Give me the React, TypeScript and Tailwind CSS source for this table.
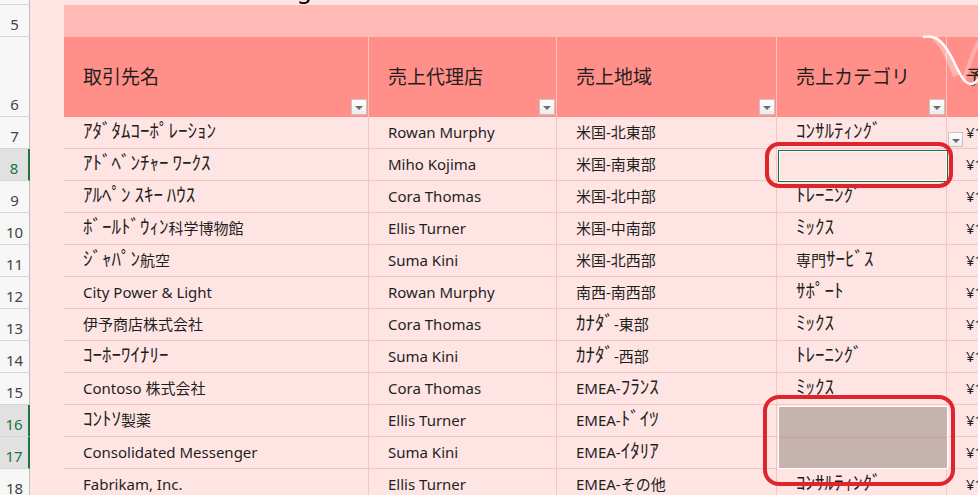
import React from 'react';

const FONT = "font-['Noto_Sans','Noto_Sans_CJK_JP',sans-serif]";

type Row = [number, string, string, string, string];

const ROWS: Row[] = [
    [7, 'ｱﾀﾞﾀﾑｺｰﾎﾟﾚｰｼｮﾝ', 'Rowan Murphy', '米国-北東部', 'ｺﾝｻﾙﾃｨﾝｸﾞ'],
    [8, 'ｱﾄﾞﾍﾞﾝﾁｬｰ ﾜｰｸｽ', 'Miho Kojima', '米国-南東部', ''],
    [9, 'ｱﾙﾍﾟﾝ ｽｷｰ ﾊｳｽ', 'Cora Thomas', '米国-北中部', 'ﾄﾚｰﾆﾝｸﾞ'],
    [10, 'ﾎﾞｰﾙﾄﾞｳｨﾝ科学博物館', 'Ellis Turner', '米国-中南部', 'ﾐｯｸｽ'],
    [11, 'ｼﾞｬﾊﾟﾝ航空', 'Suma Kini', '米国-北西部', '専門ｻｰﾋﾞｽ'],
    [12, 'City Power & Light', 'Rowan Murphy', '南西-南西部', 'ｻﾎﾟｰﾄ'],
    [13, '伊予商店株式会社', 'Cora Thomas', 'ｶﾅﾀﾞ-東部', 'ﾐｯｸｽ'],
    [14, 'ｺｰﾎｰﾜｲﾅﾘｰ', 'Suma Kini', 'ｶﾅﾀﾞ-西部', 'ﾄﾚｰﾆﾝｸﾞ'],
    [15, 'Contoso 株式会社', 'Cora Thomas', 'EMEA-ﾌﾗﾝｽ', 'ﾐｯｸｽ'],
    [16, 'ｺﾝﾄｿ製薬', 'Ellis Turner', 'EMEA-ﾄﾞｲﾂ', ''],
    [17, 'Consolidated Messenger', 'Suma Kini', 'EMEA-ｲﾀﾘｱ', ''],
    [18, 'Fabrikam, Inc.', 'Ellis Turner', 'EMEA-その他', 'ｺﾝｻﾙﾃｨﾝｸﾞ'],
];

const SELECTED = [8, 16, 17];

// half-width kana in the sheet's font are about as tall as the kanji
const Jp = ({ t }: { t: string }) => (
    <span className="whitespace-pre">
        {t.split(/([\uFF61-\uFF9F]+)/).map((part, i) =>
            /[\uFF61-\uFF9F]/.test(part)
                ? <span key={i} className="text-[19px] leading-none">{part}</span>
                : <span key={i}>{part}</span>
        )}
    </span>
);

const RowHead = ({ n }: { n?: number }) => {
    const sel = n !== undefined && SELECTED.includes(n);
    return (
        <div
            className={`w-[30px] shrink-0 flex items-end justify-center pb-[4px] text-[15px] leading-none border-b border-[#d5d5d5] ${
                sel
                    ? 'bg-[#e1e1e1] text-[#217346] border-r-2 border-r-[#217346]'
                    : 'bg-[#f7f7f7] text-[#444] border-r border-r-[#bfbfbf]'
            }`}
        >
            {n}
        </div>
    );
};

const Arrow = () => (
    <div className="w-0 h-0 mt-[2px] border-l-[4px] border-r-[4px] border-t-[4px] border-l-transparent border-r-transparent border-t-[#6d6d6d]" />
);

const FilterBtn = () => (
    <div className="absolute right-[1px] bottom-[2px] w-[16px] h-[16px] border border-[#c4c4c4] bg-gradient-to-b from-white to-[#ececec] flex items-center justify-center">
        <Arrow />
    </div>
);

const WIDTHS = ['w-[305px]', 'w-[188px]', 'w-[220px]', 'w-[170px]'];

export default function App() {
    return (
        <div className={`relative w-[978px] h-[495px] overflow-hidden bg-[#fee5e4] text-[#1f1f1f] ${FONT}`}>
            {/* Row 4 (mostly scrolled off) */}
            <div className="flex h-[5px]">
                <RowHead />
                <div className="flex-1" />
            </div>

            {/* Row 5 */}
            <div className="flex h-[32px]">
                <RowHead n={5} />
                <div className="w-[34px] shrink-0" />
                <div className="flex-1 bg-[#ffbab6]" />
            </div>

            {/* Row 6: header */}
            <div className="flex h-[80px]">
                <RowHead n={6} />
                <div className="w-[34px] shrink-0" />
                {['取引先名', '売上代理店', '売上地域', '売上カテゴリ'].map((h, i) => (
                    <div key={h} className={`${WIDTHS[i]} shrink-0 relative flex items-center pl-[19px] text-[19px] bg-[#ff8f88] border-r border-[#ffc3bf] whitespace-nowrap`}>
                        {h}
                        <FilterBtn />
                    </div>
                ))}
                <div className="flex-1 flex items-center pl-[18px] text-[19px] bg-[#ff8f88] whitespace-nowrap overflow-hidden">予測</div>
            </div>

            {/* Data rows */}
            {ROWS.map(([n, a, b, c, d]) => (
                <div key={n} className="flex h-[32px] text-[15px]">
                    <RowHead n={n} />
                    <div className="w-[34px] shrink-0" />
                    {[a, b, c, d].map((v, i) => (
                        <div key={i} className={`${WIDTHS[i]} shrink-0 flex items-center pl-[19px] border-r border-b border-[#f6c4c1] whitespace-nowrap overflow-hidden`}>
                            <Jp t={v} />
                        </div>
                    ))}
                    <div className="flex-1 flex items-center pl-[19px] border-b border-[#f6c4c1] whitespace-nowrap overflow-hidden">¥1,250,000</div>
                </div>
            ))}

            {/* clipped title descender */}
            <span className="absolute left-[297px] top-[-23px] text-[24px] leading-[24px] text-black">g</span>

            {/* theme decoration */}
            <svg className="absolute left-[915px] top-[30px]" width="63" height="65" viewBox="0 0 63 65" fill="none">
                <path d="M20 8 C30 16 34 30 41 46" stroke="#fff" strokeOpacity="0.35" strokeWidth="6" />
                <path d="M48 52 C54 36 57 22 66 8" stroke="#fff" strokeOpacity="0.3" strokeWidth="4" />
                <path d="M8 7 C22 4 30 14 38 30 C45 45 50 54 56 54 C60 54 63 50 66 46" stroke="#fff" strokeWidth="2.5" />
            </svg>

            {/* validation dropdown on E7 */}
            <div className="absolute left-[948px] top-[132px] w-[15px] h-[15px] border border-[#c4c4c4] bg-gradient-to-b from-white to-[#ececec] flex items-center justify-center">
                <Arrow />
            </div>

            {/* active cell E8 */}
            <div className="absolute left-[778px] top-[150px] w-[170px] h-[32px] border border-[#1f6e43] shadow-[inset_0_0_0_1px_#fff]" />

            {/* selected range E16:E17 */}
            <div className="absolute left-[778px] top-[406px] w-[170px] h-[63px] bg-[#c6b3b0] border border-white">
                <div className="absolute left-0 right-0 top-[30px] h-px bg-[#d49a97]" />
            </div>

            {/* red callouts */}
            <div className="absolute left-[765px] top-[142px] w-[188px] h-[46px] border-4 border-[#e0242b] rounded-[14px]" />
            <div className="absolute left-[763px] top-[395px] w-[192px] h-[91px] border-4 border-[#e0242b] rounded-[16px]" />
        </div>
    );
}
